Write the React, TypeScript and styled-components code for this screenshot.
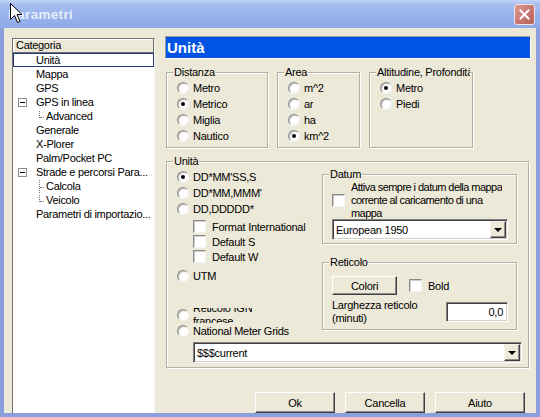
import React from 'react'
import styled, { createGlobalStyle } from 'styled-components'

const GlobalStyle = createGlobalStyle`
  html, body {
    margin: 0;
    padding: 0;
    background: #ece9d8;
  }
  body {
    font-family: "Liberation Sans", Arial, sans-serif;
    font-size: 11px;
    letter-spacing: -0.25px;
    color: #000;
  }
  * {
    box-sizing: border-box;
  }
`

const Window = styled.div`
  position: relative;
  width: 540px;
  height: 417px;
  display: flex;
  flex-direction: column;
  background: #8a9fdb;
  overflow: hidden;
`

const TitleBar = styled.div`
  height: 28px;
  flex-shrink: 0;
  display: flex;
  align-items: center;
  justify-content: space-between;
  padding: 0 5px 0 8px;
  background: linear-gradient(to bottom, #c3d4f7 0%, #a8bff0 14%, #98b3eb 55%, #8eaae8 100%);
`

const TitleText = styled.span`
  font-size: 13.5px;
  font-weight: bold;
  letter-spacing: 0.3px;
  color: #e6edfb;
`

const CloseButton = styled.div`
  width: 21px;
  height: 21px;
  border-radius: 3px;
  border: 1px solid #f1e2e4;
  background: linear-gradient(135deg, #dc9c97 0%, #c8756f 55%, #b9635c 100%);
  display: flex;
  align-items: center;
  justify-content: center;
`

const Cursor = styled.svg`
  position: absolute;
  left: 10px;
  top: 3px;
`

const Client = styled.div`
  flex: 1;
  margin: 0 4px 4px;
  background: #ece9d8;
  display: flex;
  align-items: flex-start;
  overflow: hidden;
`

/* ---------- tree ---------- */

const Tree = styled.div`
  flex-shrink: 0;
  width: 143px;
  height: 380px;
  margin: 10px 0 0 8px;
  background: #fff;
  border: 1px solid;
  border-color: #6f6f6f #f6f6f6 #f6f6f6 #6f6f6f;
  letter-spacing: -0.3px;
`

const TreeHeader = styled.div`
  height: 14px;
  line-height: 13px;
  padding-left: 3px;
  background: #ece9d8;
  border-right: 1px solid #6f6f6f;
  border-bottom: 1px solid #6f6f6f;
  box-shadow: inset 1px 1px 0 #fff;
`

const TreeRow = styled.div<{ $indent: number; $selected?: boolean }>`
  display: flex;
  align-items: center;
  height: 14px;
  padding-left: ${({ $indent }) => $indent}px;
  border: 1px solid ${({ $selected }) => ($selected ? '#22397a' : 'transparent')};
  white-space: nowrap;
`

const Expander = styled.span`
  position: relative;
  flex-shrink: 0;
  width: 9px;
  height: 9px;
  margin-right: 9px;
  background: #fff;
  border: 1px solid #8c8c8c;

  &::after {
    content: '';
    position: absolute;
    left: 1px;
    right: 1px;
    top: 3px;
    height: 1px;
    background: #000;
  }
`

const Connector = styled.span<{ $last?: boolean }>`
  position: relative;
  flex-shrink: 0;
  width: 7px;
  height: 12px;

  &::before {
    content: '';
    position: absolute;
    left: 0;
    top: ${({ $last }) => ($last ? '1px' : '0')};
    height: ${({ $last }) => ($last ? '7px' : '13px')};
    border-left: 1px dotted #7a7a7a;
  }

  &::after {
    content: '';
    position: absolute;
    left: 1px;
    top: 7px;
    width: 4px;
    border-top: 1px dotted #7a7a7a;
  }
`

/* ---------- right side ---------- */

const Pane = styled.div`
  flex: 1;
  margin-left: 10px;
  padding: 8px 5px 0 0;
  display: flex;
  flex-direction: column;
`

const PageTitle = styled.div`
  height: 23px;
  line-height: 21px;
  padding-left: 1px;
  border: 1px solid;
  border-color: #9d9d9d #fff #fff #9d9d9d;
  background: #0054e3;
  color: #fff;
  font-size: 15px;
  font-weight: bold;
  letter-spacing: 0;
`

const TopRow = styled.div`
  display: flex;
  gap: 9px;
  margin: 7px 0 0 1px;
`

const Group = styled.fieldset<{ $width: number; $mt?: number; $ml?: number }>`
  width: ${({ $width }) => $width}px;
  min-width: 0;
  margin: ${({ $mt }) => $mt ?? 0}px 0 0 ${({ $ml }) => $ml ?? 0}px;
  padding: 0;
  border: 1px solid #b3b0a1;
  box-shadow: inset 1px 1px 0 #fff, 1px 1px 0 #fff;
`

const Legend = styled.legend`
  margin-left: 6px;
  padding: 0 1px;
  line-height: 13px;
  background: #ece9d8;
  white-space: nowrap;
  overflow: hidden;
  max-width: calc(100% - 8px);
`

const GroupBody = styled.div<{ $pad: string }>`
  padding: ${({ $pad }) => $pad};
`

const UnitGrid = styled.div`
  display: grid;
  grid-template-columns: 145px 195px;
  align-items: start;
`

const Column = styled.div<{ $pt?: number }>`
  display: flex;
  flex-direction: column;
  padding-top: ${({ $pt }) => $pt ?? 0}px;
`

const OptionRow = styled.div<{ $mt?: number; $indent?: number; $h?: number }>`
  display: flex;
  align-items: center;
  gap: 4px;
  height: ${({ $h }) => $h ?? 16}px;
  margin-top: ${({ $mt }) => $mt ?? 0}px;
  padding-left: ${({ $indent }) => $indent ?? 0}px;
  white-space: nowrap;
`

const RadioDot = styled.span<{ $checked?: boolean }>`
  flex-shrink: 0;
  width: 12px;
  height: 12px;
  border-radius: 50%;
  background: #fff;
  border: 1px solid;
  border-color: #8c8c8c #f2f2f2 #f2f2f2 #8c8c8c;
  box-shadow: inset 1px 1px 1px rgba(0, 0, 0, 0.28);
  display: flex;
  align-items: center;
  justify-content: center;

  &::after {
    content: '';
    width: 4px;
    height: 4px;
    border-radius: 50%;
    background: ${({ $checked }) => ($checked ? '#000' : 'transparent')};
  }
`

const CheckBox = styled.span`
  flex-shrink: 0;
  width: 13px;
  height: 13px;
  margin-right: 2px;
  background: #fff;
  border: 1px solid;
  border-color: #8a8a8a #f4f4f4 #f4f4f4 #8a8a8a;
  box-shadow: inset 1px 1px 0 #cfcfcf;
`

const ClippedLabel = styled.div`
  height: 15px;
  display: flex;
  align-items: center;
  overflow: hidden;
  line-height: 13px;
`

const MultiLine = styled.div<{ $h?: number; $tight?: boolean }>`
  line-height: 13px;
  white-space: nowrap;
  letter-spacing: ${({ $tight }) => ($tight ? '-0.55px' : 'inherit')};
  ${({ $h }) => ($h ? `height: ${$h}px; overflow: hidden; align-self: flex-start;` : '')}
`

const DatumRow = styled.div`
  display: flex;
  align-items: center;
  gap: 4px;
  height: 38px;
  overflow: hidden;
`

const Combo = styled.div<{ $width?: number; $ml?: number; $mt?: number }>`
  display: flex;
  align-items: center;
  width: ${({ $width }) => ($width ? `${$width}px` : 'auto')};
  height: 21px;
  margin: ${({ $mt }) => $mt ?? 0}px 0 0 ${({ $ml }) => $ml ?? 0}px;
  padding-left: 3px;
  background: #fff;
  border: 1px solid;
  border-color: #808080 #fff #fff #808080;
  box-shadow: inset 1px 1px 0 #404040, inset -1px -1px 0 #d4d0c8;
  white-space: nowrap;
`

const DropButton = styled.span`
  width: 16px;
  height: 17px;
  margin-left: auto;
  margin-right: 1px;
  background: #ece9d8;
  border: 1px solid;
  border-color: #f4f3ee #404040 #404040 #f4f3ee;
  box-shadow: inset -1px -1px 0 #8c8c8c;
  display: flex;
  align-items: center;
  justify-content: center;
`

const Arrow = styled.span`
  width: 0;
  height: 0;
  border-left: 4px solid transparent;
  border-right: 4px solid transparent;
  border-top: 4px solid #000;
  margin-top: 1px;
`

const Row = styled.div<{ $mt?: number; $gap?: number; $between?: boolean }>`
  display: flex;
  align-items: center;
  gap: ${({ $gap }) => $gap ?? 0}px;
  margin-top: ${({ $mt }) => $mt ?? 0}px;
  justify-content: ${({ $between }) => ($between ? 'space-between' : 'flex-start')};
`

const Button = styled.div<{ $width: number }>`
  width: ${({ $width }) => $width}px;
  height: ${({ $width }) => ($width < 70 ? 19 : 21)}px;
  display: flex;
  align-items: center;
  justify-content: center;
  background: #ece9d8;
  border: 1px solid;
  border-color: #fff #404040 #404040 #fff;
  box-shadow: inset -1px -1px 0 #8c8c8c;
`

const Edit = styled.div`
  width: 62px;
  height: 20px;
  display: flex;
  align-items: center;
  justify-content: flex-end;
  padding-right: 4px;
  background: #fff;
  border: 1px solid;
  border-color: #808080 #fff #fff #808080;
  box-shadow: inset 1px 1px 0 #404040, inset -1px -1px 0 #d4d0c8;
`

const ButtonBar = styled.div`
  display: flex;
  justify-content: flex-end;
  gap: 10px;
  margin: 24px 6px 0 0;
`

type TreeItem = { label: string; level?: number; expander?: boolean; last?: boolean; selected?: boolean }

const treeItems: TreeItem[] = [
  { label: 'Unità', selected: true },
  { label: 'Mappa' },
  { label: 'GPS' },
  { label: 'GPS in linea', expander: true },
  { label: 'Advanced', level: 1, last: true },
  { label: 'Generale' },
  { label: 'X-Plorer' },
  { label: 'Palm/Pocket PC' },
  { label: 'Strade e percorsi Para...', expander: true },
  { label: 'Calcola', level: 1 },
  { label: 'Veicolo', level: 1, last: true },
  { label: 'Parametri di importazio...' },
]

function Radio({ label, checked, mt, h }: { label: React.ReactNode; checked?: boolean; mt?: number; h?: number }) {
  return (
    <OptionRow $mt={mt} $h={h}>
      <RadioDot $checked={checked} />
      {label}
    </OptionRow>
  )
}

function Check({ label, indent, mt, h }: { label: string; indent?: number; mt?: number; h?: number }) {
  return (
    <OptionRow $indent={indent} $mt={mt} $h={h}>
      <CheckBox />
      {label}
    </OptionRow>
  )
}

export default function App() {
  return (
    <>
      <GlobalStyle />
      <Window>
        <TitleBar>
          <TitleText>Parametri</TitleText>
          <CloseButton>
            <svg width="11" height="11" viewBox="0 0 11 11">
              <path d="M1.5 1.5 L9.5 9.5 M9.5 1.5 L1.5 9.5" stroke="#fff" strokeWidth="2" strokeLinecap="square" />
            </svg>
          </CloseButton>
        </TitleBar>

        <Client>
          <Tree>
            <TreeHeader>Categoria</TreeHeader>
            {treeItems.map((item) => {
              if (item.level === 1) {
                return (
                  <TreeRow key={item.label} $indent={25}>
                    <Connector $last={item.last} />
                    {item.label}
                  </TreeRow>
                )
              }
              return (
                <TreeRow key={item.label} $indent={item.expander ? 4 : 22} $selected={item.selected}>
                  {item.expander && <Expander />}
                  {item.label}
                </TreeRow>
              )
            })}
          </Tree>

          <Pane>
            <PageTitle>Unità</PageTitle>

            <TopRow>
              <Group $width={102}>
                <Legend>Distanza</Legend>
                <GroupBody $pad="1px 0 3px 10px">
                  <Radio label="Metro" />
                  <Radio label="Metrico" checked />
                  <Radio label="Miglia" />
                  <Radio label="Nautico" />
                </GroupBody>
              </Group>
              <Group $width={83}>
                <Legend>Area</Legend>
                <GroupBody $pad="1px 0 3px 10px">
                  <Radio label="m^2" />
                  <Radio label="ar" />
                  <Radio label="ha" />
                  <Radio label="km^2" checked />
                </GroupBody>
              </Group>
              <Group $width={104}>
                <Legend>Altitudine, Profondità</Legend>
                <GroupBody $pad="1px 0 3px 10px">
                  <Radio label="Metro" checked />
                  <Radio label="Piedi" />
                </GroupBody>
              </Group>
            </TopRow>

            <Group $width={363} $mt={7} $ml={1}>
              <Legend>Unità</Legend>
              <GroupBody $pad="0 6px 4px 10px">
                <UnitGrid>
                  <Column $pt={1}>
                    <Radio label="DD*MM'SS,S" checked />
                    <Radio label="DD*MM,MMM'" />
                    <Radio label="DD,DDDDD*" />
                    <Check label="Format International" indent={16} mt={2} h={15} />
                    <Check label="Default S" indent={16} h={15} />
                    <Check label="Default W" indent={16} h={15} />
                    <Radio label="UTM" mt={4} />
                    <Radio
                      mt={23}
                      label={
                        <ClippedLabel>
                          <MultiLine>
                            Reticolo IGN
                            <br />
                            francese
                          </MultiLine>
                        </ClippedLabel>
                      }
                    />
                    <Radio label="National Meter Grids" />
                  </Column>

                  <Column>
                    <Group $width={195}>
                      <Legend>Datum</Legend>
                      <GroupBody $pad="0 8px 3px 9px">
                        <DatumRow>
                          <CheckBox />
                          <MultiLine $h={38} $tight>
                            Attiva sempre i datum della mappa
                            <br />
                            corrente al caricamento di una
                            <br />
                            mappa
                          </MultiLine>
                        </DatumRow>
                        <Combo $width={176}>
                          European 1950
                          <DropButton>
                            <Arrow />
                          </DropButton>
                        </Combo>
                      </GroupBody>
                    </Group>

                    <Group $width={195} $mt={12}>
                      <Legend>Reticolo</Legend>
                      <GroupBody $pad="7px 8px 4px 9px">
                        <Row $gap={12}>
                          <Button $width={65}>Colori</Button>
                          <OptionRow $h={19}>
                            <CheckBox />
                            Bold
                          </OptionRow>
                        </Row>
                        <Row $mt={4} $between>
                          <MultiLine>
                            Larghezza reticolo
                            <br />
                            (minuti)
                          </MultiLine>
                          <Edit>0,0</Edit>
                        </Row>
                      </GroupBody>
                    </Group>
                  </Column>
                </UnitGrid>

                <Combo $ml={16} $mt={3}>
                  $$$current
                  <DropButton>
                    <Arrow />
                  </DropButton>
                </Combo>
              </GroupBody>
            </Group>

            <ButtonBar>
              <Button $width={80}>Ok</Button>
              <Button $width={80}>Cancella</Button>
              <Button $width={90}>Aiuto</Button>
            </ButtonBar>
          </Pane>
        </Client>

        <Cursor width="13" height="21" viewBox="0 0 13 21">
          <path
            d="M0.5 0.5 L0.5 16.5 L4.5 12.5 L7.5 19.5 L10 18.5 L7 11.5 L12 11.5 Z"
            fill="#fff"
            stroke="#000"
            strokeWidth="1"
            strokeLinejoin="miter"
          />
        </Cursor>
      </Window>
    </>
  )
}
